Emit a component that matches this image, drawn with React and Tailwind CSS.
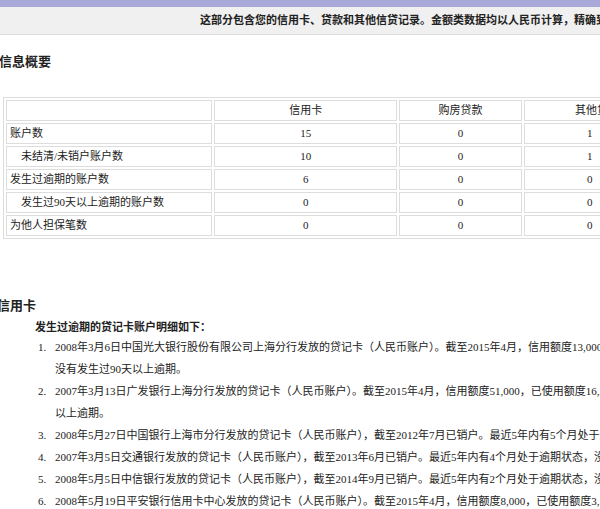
export default function App() {
  const f = { fontFamily: '"Liberation Serif","Noto Sans CJK SC",serif' };
  const rows = [
    ["账户数", "15", "0", "1", false],
    ["未结清/未销户账户数", "10", "0", "1", true],
    ["发生过逾期的账户数", "6", "0", "0", false],
    ["发生过90天以上逾期的账户数", "0", "0", "0", true],
    ["为他人担保笔数", "0", "0", "0", false],
  ];
  const items = [
    ["1.", "2008年3月6日中国光大银行股份有限公司上海分行发放的贷记卡（人民币账户）。截至2015年4月，信用额度13,000，已使用额度", "没有发生过90天以上逾期。"],
    ["2.", "2007年3月13日广发银行上海分行发放的贷记卡（人民币账户）。截至2015年4月，信用额度51,000，已使用额度16,289。最近5年内", "以上逾期。"],
    ["3.", "2008年5月27日中国银行上海市分行发放的贷记卡（人民币账户），截至2012年7月已销户。最近5年内有5个月处于逾期状态"],
    ["4.", "2007年3月5日交通银行发放的贷记卡（人民币账户），截至2013年6月已销户。最近5年内有4个月处于逾期状态，没有发生过"],
    ["5.", "2008年5月5日中信银行发放的贷记卡（人民币账户），截至2014年9月已销户。最近5年内有2个月处于逾期状态，没有发生过"],
    ["6.", "2008年5月19日平安银行信用卡中心发放的贷记卡（人民币账户）。截至2015年4月，信用额度8,000，已使用额度3,503。最近"],
  ];
  return (
    <div className="w-[600px] h-[509px] overflow-hidden bg-white text-[#222]" style={f}>
      <div className="h-[7px] bg-[#a9a9d9]" />
      <div className="h-[28px] bg-[#f0f0f0] border-b border-[#ddd] flex items-center pl-[200px] whitespace-nowrap text-[11px] font-bold">
        这部分包含您的信用卡、贷款和其他信贷记录。金额类数据均以人民币计算，精确到元。
      </div>
      <div className="mt-[18px] text-[13px] font-bold leading-[18px] -ml-px">信息概要</div>
      <div className="mt-[26px] ml-[3px] w-[620px]">
        <table className="border-separate border-spacing-[2px] border border-[#ddd] w-full text-[11px] whitespace-nowrap">
          <tbody>
            <tr className="h-[21px]">
              <td className="border border-[#ddd] w-[207px]"></td>
              <td className="border border-[#ddd] text-center w-[185px]">信用卡</td>
              <td className="border border-[#ddd] text-center w-[124px]">购房贷款</td>
              <td className="border border-[#ddd] pl-[50px]">其他贷款</td>
            </tr>
            {rows.map((r, i) => (
              <tr key={i} className="h-[21px]">
                <td className={"border border-[#ddd] " + (r[4] ? "pl-[14px]" : "pl-[3px]")}>{r[0]}</td>
                <td className="border border-[#ddd] text-center">{r[1]}</td>
                <td className="border border-[#ddd] text-center">{r[2]}</td>
                <td className="border border-[#ddd] pl-[62px]">{r[3]}</td>
              </tr>
            ))}
          </tbody>
        </table>
      </div>
      <div className="mt-[58px] text-[13px] font-bold leading-[18px] -ml-[3px]">信用卡</div>
      <div className="mt-[4px] ml-[35px] text-[11px] font-bold leading-[16px]">发生过逾期的贷记卡账户明细如下：</div>
      <div className="mt-[1px] text-[11px] leading-[22px] whitespace-nowrap">
        {items.map((it, i) => (
          <div key={i}>
            <div className="flex"><span className="w-[55px] shrink-0 pl-[38px]">{it[0]}</span><span>{it[1]}</span></div>
            {it[2] && <div className="pl-[55px]">{it[2]}</div>}
          </div>
        ))}
      </div>
    </div>
  );
}
